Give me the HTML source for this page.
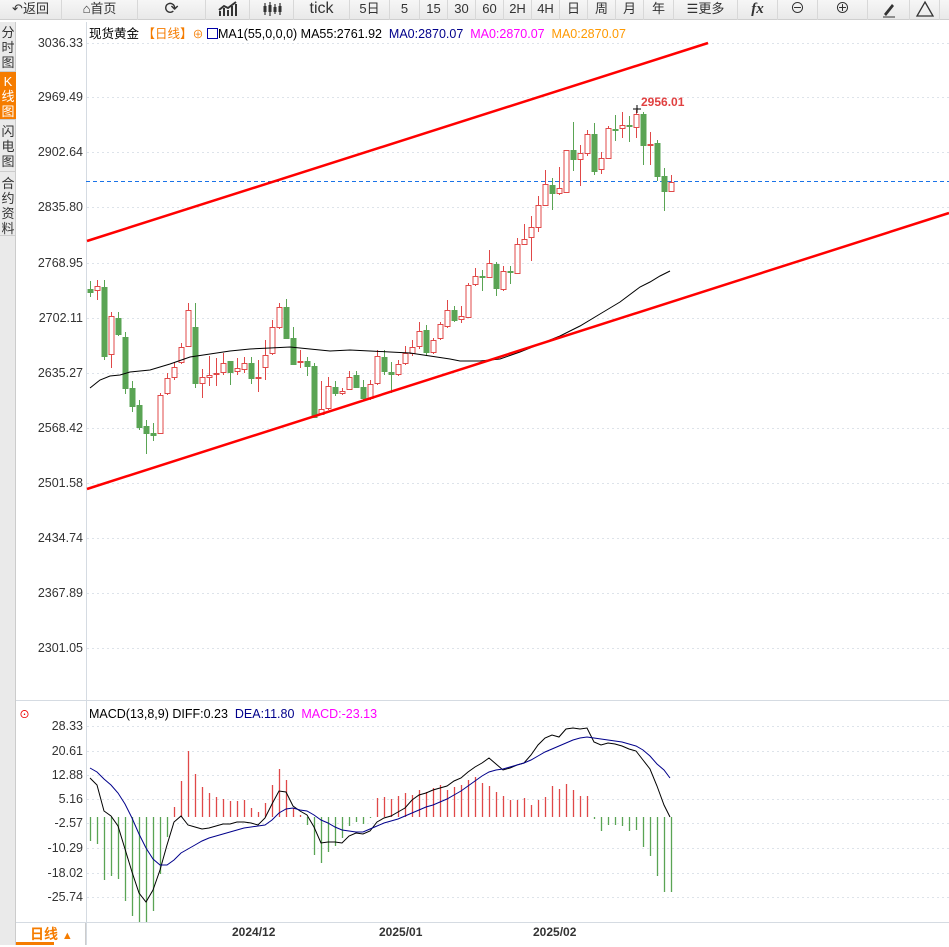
<!DOCTYPE html>
<html><head><meta charset="utf-8">
<style>
*{margin:0;padding:0;box-sizing:border-box}
body{width:949px;height:945px;background:#fff;font-family:"Liberation Sans","Noto Sans CJK SC",sans-serif;overflow:hidden;position:relative}
#tb{position:absolute;left:0;top:0;width:949px;height:20px;background:linear-gradient(#f6f6f6,#e9e9e9);border-bottom:1px solid #cfcfcf}
#tb div{position:absolute;top:0;height:20px;line-height:18px;font-size:13px;color:#333;text-align:center;border-right:1px solid #d8d8d8}
#side{position:absolute;left:0;top:22px;width:16px;height:923px;background:#eaeaea;border-right:1px solid #ccc}
#side div{position:absolute;left:0;width:16px;font-size:13px;line-height:15px;text-align:center;color:#333;border-bottom:1px solid #ccc}
.ax{position:absolute;right:866px;font-size:12.5px;color:#333;text-align:right;white-space:nowrap}
</style></head><body>
<div id="tb">
<div style="left:0;width:62px">&#8630;返回</div>
<div style="left:62px;width:76px">&#8962;首页</div>
<div style="left:138px;width:68px;font-size:17px">&#10227;</div>
<div style="left:206px;width:44px">
<svg width="22" height="18" viewBox="0 0 22 18"><path d="M3 16V11M7 16V8M11 16V10M15 16V6M19 16V4M2 10L7 6L11 8L19 2" stroke="#333" stroke-width="2" fill="none"/></svg></div>
<div style="left:250px;width:44px"><svg width="22" height="18" viewBox="0 0 22 18"><path d="M4 3V15M9 2V16M14 4V14M19 3V15" stroke="#333" stroke-width="1.2"/><rect x="2.5" y="6" width="3" height="6" fill="#333"/><rect x="7.5" y="5" width="3" height="7" fill="#333"/><rect x="12.5" y="7" width="3" height="5" fill="#333"/><rect x="17.5" y="6" width="3" height="6" fill="#333"/></svg></div>
<div style="left:294px;width:56px;font-size:16px">tick</div>
<div style="left:350px;width:40px">5日</div>
<div style="left:390px;width:30px">5</div>
<div style="left:420px;width:28px">15</div>
<div style="left:448px;width:28px">30</div>
<div style="left:476px;width:28px">60</div>
<div style="left:504px;width:28px">2H</div>
<div style="left:532px;width:28px">4H</div>
<div style="left:560px;width:28px">日</div>
<div style="left:588px;width:28px">周</div>
<div style="left:616px;width:28px">月</div>
<div style="left:644px;width:30px">年</div>
<div style="left:674px;width:64px">&#9776;更多</div>
<div style="left:738px;width:40px;font-weight:bold;font-style:italic;font-family:'Liberation Serif',serif;font-size:15px">fx</div>
<div style="left:778px;width:40px;font-size:15px">&#8854;</div>
<div style="left:818px;width:50px;font-size:15px">&#8853;</div>
<div style="left:868px;width:42px"><svg width="16" height="18" viewBox="0 0 16 18"><path d="M3 14L11 4L13 6L5 16Z" fill="#333"/><path d="M2 17H14" stroke="#333"/></svg></div>
<div style="left:910px;width:30px"><svg width="20" height="18" viewBox="0 0 20 18"><path d="M10 2L18 16H2Z" stroke="#333" fill="none" stroke-width="1.3"/></svg></div>
</div>
<div id="side">
<div style="top:0;height:50px;padding-top:3px">分<br>时<br>图</div>
<div style="top:50px;height:48px;background:#f57c00;color:#fff;padding-top:2px">K<br>线<br>图</div>
<div style="top:98px;height:52px;padding-top:4px">闪<br>电<br>图</div>
<div style="top:150px;height:64px;padding-top:4px;line-height:15px">合<br>约<br>资<br>料</div>
</div>

<div style="position:absolute;left:89px;top:23px;font-size:12.5px;white-space:nowrap;color:#000">现货黄金 <span style="color:#f57c00">【日线】</span><span style="color:#f57c00;font-size:11px">&#8853;</span> <span style="display:inline-block;width:11px;height:11px;border:1px solid #00a;vertical-align:-1px;background:#fff"></span>MA1(55,0,0,0) MA55:2761.92 &nbsp;<span style="color:#00008b">MA0:2870.07</span> &nbsp;<span style="color:#f0f">MA0:2870.07</span> &nbsp;<span style="color:#f90">MA0:2870.07</span></div>

<div class="ax" style="top:36px">3036.33</div>
<div class="ax" style="top:90px">2969.49</div>
<div class="ax" style="top:145px">2902.64</div>
<div class="ax" style="top:200px">2835.80</div>
<div class="ax" style="top:256px">2768.95</div>
<div class="ax" style="top:311px">2702.11</div>
<div class="ax" style="top:366px">2635.27</div>
<div class="ax" style="top:421px">2568.42</div>
<div class="ax" style="top:476px">2501.58</div>
<div class="ax" style="top:531px">2434.74</div>
<div class="ax" style="top:586px">2367.89</div>
<div class="ax" style="top:641px">2301.05</div>

<div style="position:absolute;left:89px;top:707px;font-size:12.5px;white-space:nowrap">MACD(13,8,9) DIFF:0.23 &nbsp;<span style="color:#00008b">DEA:11.80</span> &nbsp;<span style="color:#f0f">MACD:-23.13</span></div>
<div style="position:absolute;left:18px;top:704px;color:#e00;font-size:13px">&#9737;</div>
<div class="ax" style="top:719px">28.33</div>
<div class="ax" style="top:744px">20.61</div>
<div class="ax" style="top:768px">12.88</div>
<div class="ax" style="top:792px">5.16</div>
<div class="ax" style="top:816px">-2.57</div>
<div class="ax" style="top:841px">-10.29</div>
<div class="ax" style="top:866px">-18.02</div>
<div class="ax" style="top:890px">-25.74</div>

<div style="position:absolute;left:16px;top:922px;width:70px;height:23px;border-top:1px solid #ccc;border-right:1px solid #ccc;color:#f57c00;font-size:14px;font-weight:bold;line-height:22px;padding-left:14px">日线 <span style="font-size:11px">&#9650;</span></div>
<div style="position:absolute;left:16px;top:942px;width:38px;height:3px;background:#f57c00"></div>
<div style="position:absolute;left:232px;top:925px;font-size:12px;font-weight:bold;color:#333">2024/12</div>
<div style="position:absolute;left:379px;top:925px;font-size:12px;font-weight:bold;color:#333">2025/01</div>
<div style="position:absolute;left:533px;top:925px;font-size:12px;font-weight:bold;color:#333">2025/02</div>

<svg id="sv" width="949" height="945" style="position:absolute;left:0;top:0" xmlns="http://www.w3.org/2000/svg">
<g stroke="#dde3ea" stroke-dasharray="2,3" stroke-width="1" id="grid"></g>
<line x1="86.5" y1="22" x2="86.5" y2="945" stroke="#d5dbe2"/>
<line x1="16" y1="700.5" x2="949" y2="700.5" stroke="#d5dbe2"/>
<line x1="16" y1="922.5" x2="949" y2="922.5" stroke="#d5dbe2"/>
<line x1="86" y1="181.5" x2="949" y2="181.5" stroke="#1a73e8" stroke-dasharray="4,3"/>
<g id="c"></g>
<polyline id="ma" fill="none" stroke="#000" stroke-width="1"/>
<line x1="87" y1="241" x2="708" y2="43" stroke="#f00" stroke-width="2.5"/>
<line x1="87" y1="489" x2="949" y2="213" stroke="#f00" stroke-width="2.5"/>
<text x="641" y="106" font-size="12" font-weight="bold" fill="#e04040" font-family="Liberation Sans">2956.01</text>
<path d="M633 109H641M637 105V113" stroke="#000"/>
<g id="h"></g>
<polyline id="dif" fill="none" stroke="#000" stroke-width="1"/>
<polyline id="dea" fill="none" stroke="#00008b" stroke-width="1"/>
</svg>
<script>
var NS="http://www.w3.org/2000/svg";
function el(p,t,a){var e=document.createElementNS(NS,t);for(var k in a)e.setAttribute(k,a[k]);p.appendChild(e);return e;}
var g=document.getElementById('grid');
[43,97,152,207,263,318,373,428,483,538,593,648,726,751,775,799,823,848,873,897].forEach(function(y){el(g,'line',{x1:87,y1:y+.5,x2:949,y2:y+.5});});
// [color, top, bottom, hi, lo]
var C=[
['g',289,292,281,297],['r',286,290,280,300],['g',287,356,280,360],['r',316,354,312,368],['g',318,334,312,336],
['g',337,388,332,394],['g',388,406,381,412],['g',405,427,400,430],['g',426,433,420,454],['g',433,435,423,441],
['r',395,433,393,433],['r',378,393,373,395],['r',367,377,362,380],['r',347,362,343,364],['r',310,346,303,346],
['g',327,383,303,388],['r',377,383,369,398],['r',375,377,356,386],['r',373,374,358,386],['r',363,372,353,375],
['g',361,372,361,385],['r',368,371,358,375],['r',363,369,357,373],['g',363,378,357,384],['r',377,378,360,392],
['r',355,367,340,380],['r',327,353,320,355],['r',307,327,303,329],['g',307,338,299,339],['g',338,364,327,365],
['r',361,362,350,368],['g',361,366,357,376],['g',366,417,363,417],['r',409,414,381,415],['r',386,408,377,410],
['g',387,393,381,396],['r',391,393,388,395],['r',377,389,371,390],['g',375,387,371,388],['g',387,398,380,400],
['r',384,398,380,400],['r',356,383,350,385],['g',357,371,350,375],['g',372,374,362,393],['r',364,374,360,376],
['r',353,363,346,365],['r',347,353,340,356],['r',331,346,322,349],['g',330,352,325,356],['r',340,352,338,354],
['r',324,338,322,340],['r',310,326,300,328],['g',310,320,306,322],['r',316,319,306,323],['r',285,317,283,318],
['r',276,284,268,286],['g',276,277,270,291],['r',263,277,250,278],['g',264,288,262,296],['r',271,289,266,291],
['g',271,272,266,284],['r',244,273,238,274],['r',239,244,224,245],['r',227,237,216,261],['r',205,227,196,232],
['r',184,205,170,206],['g',185,193,178,210],['r',188,193,167,195],['r',150,192,167,193],['g',150,159,122,171],
['r',153,159,145,186],['r',134,153,130,156],['g',134,171,123,175],['r',158,169,152,174],['r',128,158,126,159],
['g',129,130,115,141],['r',125,128,112,138],['g',125,126,116,142],['r',114,127,110,138],['g',114,145,112,165],
['r',144,145,132,165],['g',143,176,140,181],['g',176,191,168,211],['r',182,191,175,192]];
var cg=document.getElementById('c');
C.forEach(function(d,i){var x=90+7*i,col=d[0]=='r'?'#e04848':'#5aa454';
el(cg,'line',{x1:x+.5,y1:d[3],x2:x+.5,y2:d[4],stroke:col});
var h=Math.max(d[2]-d[1],1);
if(d[0]=='r')el(cg,'rect',{x:x-2,y:d[1]+.5,width:5,height:h,fill:'#fff',stroke:col});
else el(cg,'rect',{x:x-2.5,y:d[1],width:6,height:h+1,fill:col});});
document.getElementById('ma').setAttribute('points','90,388 100,380 110,376 120,375 130,372 150,370 170,364 190,357 210,354 230,351 250,349 270,348 290,347 310,349 330,351 350,350 370,351 390,352 410,353 430,356 450,359 460,361 480,361 500,359 520,352 540,344 560,336 580,326 600,314 620,302 640,287 650,282 660,276 670,271');
var H=[841,844,880,876,879,901,916,922,922,911,874,837,807,781,751,774,787,793,797,799,801,801,800,808,812,803,785,769,780,808,815,825,855,863,852,846,838,826,822,824,818,798,797,799,796,793,795,790,792,788,785,790,787,785,780,777,783,786,792,796,800,800,798,805,800,797,786,789,784,790,796,796,819,831,825,825,826,831,830,847,856,876,892,892];
var hg=document.getElementById('h');
H.forEach(function(v,i){var x=90.5+7*i;el(hg,'line',{x1:x,y1:817,x2:x,y2:v,stroke:v<817?'#e04848':'#5aa454','stroke-width':1.3});});
document.getElementById('dif').setAttribute('points','90,778 97,785 104,811 111,816 118,826 125,849 132,872 139,893 146,902 153,890 160,870 167,845 174,822 181,816 188,825 195,827 202,829 209,828 216,826 223,824 230,824 237,822 244,822 251,823 258,825 265,818 272,804 279,791 286,792 293,806 300,811 307,815 314,827 321,843 328,842 335,842 342,843 349,836 356,833 363,834 370,831 377,822 384,818 391,816 398,812 405,808 412,800 419,795 426,793 433,790 440,788 447,786 454,781 461,778 468,772 475,767 482,763 489,758 496,764 503,770 510,768 517,765 524,763 531,755 538,745 545,738 552,735 559,737 566,729 573,728 580,729 587,728 594,742 601,745 608,743 615,744 622,746 629,749 636,751 643,760 650,769 657,786 664,805 670,817');
document.getElementById('dea').setAttribute('points','90,768 97,772 104,779 111,785 118,793 125,804 132,818 139,834 146,848 153,859 160,865 167,865 174,860 181,853 188,849 195,845 202,841 209,838 216,836 223,834 230,832 237,830 244,828 251,827 258,826 265,825 272,820 279,813 286,809 293,808 300,810 307,811 314,815 321,820 328,823 335,827 342,830 349,831 356,832 363,832 370,829 377,826 384,823 391,821 398,819 405,816 412,813 419,810 426,807 433,805 440,802 447,799 454,795 461,791 468,786 475,781 482,776 489,772 496,770 503,769 510,767 517,765 524,763 531,760 538,756 545,752 552,749 559,746 566,743 573,740 580,738 587,737 594,738 601,739 608,740 615,741 622,742 629,744 636,746 643,750 650,756 657,764 664,770 670,778');
</script>
</body></html>
